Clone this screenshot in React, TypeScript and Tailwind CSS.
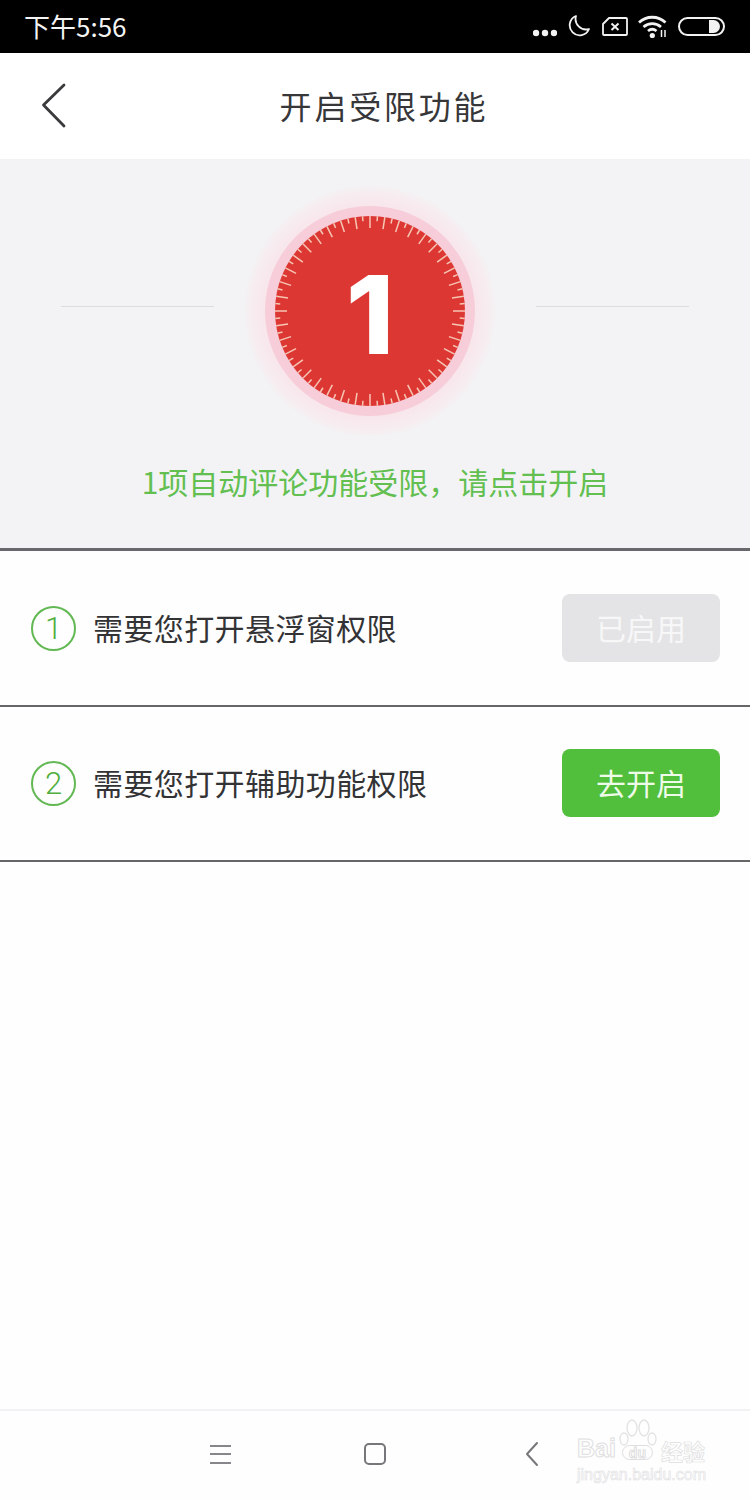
const TICKS = Array.from({ length: 80 }, (_, i) => i);

function Dial() {
  return (
    <div className="relative w-[250px] h-[250px] shrink-0">
      <svg width="250" height="250" viewBox="0 0 250 250">
        <defs>
          <radialGradient id="halo" cx="50%" cy="50%" r="50%">
            <stop offset="84%" stopColor="#f8e6eb" />
            <stop offset="94%" stopColor="#f7ecf0" />
            <stop offset="100%" stopColor="#f4f1f3" />
          </radialGradient>
        </defs>
        <circle cx="125" cy="125" r="125" fill="url(#halo)" />
        <circle cx="125" cy="125" r="105" fill="#f6cdd8" />
        <circle cx="125" cy="125" r="95" fill="#dd3733" />
        {TICKS.map((i) => (
          <line
            key={i}
            x1="125"
            y1="30"
            x2="125"
            y2={i % 2 === 0 ? 42 : 35}
            stroke="#f6c6b4"
            strokeWidth="1.500"
            transform={`rotate(${i * 4.5} 125 125)`}
          />
        ))}
      </svg>
      <div className="absolute inset-0 pt-[6px] flex items-center justify-center text-white text-[109px] font-extrabold font-['Inter',sans-serif] leading-none">
        1
      </div>
    </div>
  );
}

function StatusIcons() {
  return (
    <div className="flex items-center text-white">
      <svg width="24" height="8" viewBox="0 0 24 8" className="mt-[12px]">
        <circle cx="3" cy="4" r="3.200" fill="#f2f2f2" />
        <circle cx="12" cy="4" r="3.200" fill="#f2f2f2" />
        <circle cx="21" cy="4" r="3.200" fill="#f2f2f2" />
      </svg>
      <svg width="24" height="24" viewBox="0 0 24 24" fill="none" className="ml-[9px] -mt-[2px]">
        <path d="M10 2a10 10 0 1 0 13 13A10.500 10.500 0 0 1 10 2Z" stroke="#f2f2f2" strokeWidth="1.800" strokeLinejoin="round" />
      </svg>
      <svg width="26" height="19" viewBox="0 0 26 19" fill="none" className="ml-[12px]">
        <path d="M7 1h17a1 1 0 0 1 1 1v15a1 1 0 0 1-1 1H2a1 1 0 0 1-1-1V7Z" stroke="#f2f2f2" strokeWidth="1.800" strokeLinejoin="round" />
        <path d="M9.500 6.500l7 6.500M16.500 6.500l-7 6.500" stroke="#f2f2f2" strokeWidth="2" />
      </svg>
      <svg width="30" height="24" viewBox="0 0 30 24" fill="none" className="ml-[10px] mt-[1px]">
        <path d="M1 7.500c7.500-7 19-7 26.500 0" stroke="#f2f2f2" strokeWidth="2.800" />
        <path d="M5.500 12c5-4.500 12.500-4.500 17.500 0" stroke="#f2f2f2" strokeWidth="2.800" />
        <path d="M10 16c2.500-2 6-2 8.500 0" stroke="#f2f2f2" strokeWidth="2.800" />
        <circle cx="14.300" cy="20.500" r="2.600" fill="#f2f2f2" />
        <path d="M23.500 15v7M27 15v7" stroke="#f2f2f2" strokeWidth="1.500" />
      </svg>
      <div className="ml-[10px] w-[47px] h-[19px] rounded-full border-2 border-[#f2f2f2] flex justify-end items-center">
        <div className="w-[11px] h-[13px] mr-[3px] bg-[#f2f2f2] rounded-r-full" />
      </div>
    </div>
  );
}

function PermissionRow({
  num,
  label,
  action,
  enabled,
  className,
}: {
  num: number;
  label: string;
  action: string;
  enabled: boolean;
  className: string;
}) {
  return (
    <div className={`${className} shrink-0 border-b-2 border-[#666668] flex items-center pl-[31px] pr-[30px]`}>
      <div className="w-[45px] h-[45px] rounded-full border-2 border-[#62b852] flex items-center justify-center pt-[1px] text-[31px] leading-none font-light text-[#4fae3c] font-['Roboto',sans-serif]">
        {num}
      </div>
      <span className="ml-[17px] -mt-[2px] text-[30px] tracking-[0.4px] text-[#333336]">{label}</span>
      <button
        className={`ml-auto w-[158px] h-[68px] pb-[2px] rounded-lg text-[30px] ${
          enabled ? "bg-[#e4e4e6] text-[#f7f7f8]" : "bg-[#52bf3c] text-[#eefbe9]"
        }`}
      >
        {action}
      </button>
    </div>
  );
}

function Watermark() {
  return (
    <div className="absolute left-[577px] top-[8px] w-[136px] text-transparent [-webkit-text-stroke:1px_#dedee0] font-['Liberation_Sans',sans-serif]">
      <div className="flex items-end h-[42px] leading-none">
        <span className="text-[25px] font-bold">Bai</span>
        <span className="relative ml-[6px] mb-[1px] w-[31px] h-[15px] border-[1.500px] border-[#dedee0] rounded-full flex items-center justify-center text-[14px] font-bold">
          du
          <svg width="40" height="28" viewBox="0 0 40 28" className="absolute -top-[27px] -left-[5px]" fill="none" stroke="#e2e2e4" strokeWidth="1.300">
            <ellipse cx="6" cy="20" rx="4" ry="6" />
            <ellipse cx="14" cy="9" rx="5" ry="8" />
            <ellipse cx="26" cy="9" rx="5" ry="8" />
            <ellipse cx="34" cy="20" rx="4" ry="6" />
          </svg>
        </span>
        <span className="ml-[8px] text-[22px] font-['Noto_Sans_CJK_SC',sans-serif] font-bold [-webkit-text-stroke:0.700px_#dedee0]">经验</span>
      </div>
      <div className="text-[16px] leading-none mt-[6px] [-webkit-text-stroke:0.600px_#e0e0e2]">jingyan.baidu.com</div>
    </div>
  );
}

export default function App() {
  return (
    <div className="w-[750px] h-[1500px] overflow-hidden flex flex-col bg-[#fefefe] font-['Noto_Sans_CJK_SC','Noto_Sans',sans-serif]">
      <div className="h-[53px] shrink-0 bg-black flex items-center justify-between pl-[24px] pr-[25px]">
        <span className="text-[26px] pb-[2px] text-[#f4f4f4]">下午5:56</span>
        <StatusIcons />
      </div>

      <div className="h-[106px] shrink-0 bg-white relative flex items-center justify-center pl-[18px] pb-[2px]">
        <svg width="26" height="46" viewBox="0 0 26 46" fill="none" className="absolute left-[41px] top-[30px]">
          <path d="M23 2 L2.500 22 L23 43" stroke="#3a3a3c" strokeWidth="2.800" strokeLinecap="round" strokeLinejoin="round" />
        </svg>
        <span className="text-[32px] tracking-[2.800px] text-[#37373a]">开启受限功能</span>
      </div>

      <div className="h-[389px] shrink-0 bg-[#f3f3f5] flex flex-col items-center pt-[27px]">
        <div className="flex items-start">
          <div className="w-[153px] h-px mt-[120px] bg-[#dcdcdf]" />
          <div className="ml-[31px] mr-[41px]">
            <Dial />
          </div>
          <div className="w-[153px] h-px mt-[120px] bg-[#dcdcdf]" />
        </div>
        <div className="mt-[25px] h-[40px] leading-[40px] text-[30px] text-[#62bf50]">
          1项自动评论功能受限，请点击开启
        </div>
      </div>

      <div className="h-[3px] shrink-0 bg-[#68686c]" />

      <PermissionRow className="h-[156px]" num={1} label="需要您打开悬浮窗权限" action="已启用" enabled />
      <PermissionRow className="h-[155px] pb-[1px]" num={2} label="需要您打开辅助功能权限" action="去开启" enabled={false} />

      <div className="flex-1" />

      <div className="h-[91px] shrink-0 border-t-2 border-[#f2f2f4] pb-[3px] relative flex items-center">
        <div className="w-[21px] h-[19px] ml-[210px] flex flex-col justify-between">
          <div className="h-[2px] bg-[#87878b]" />
          <div className="h-[2px] bg-[#87878b]" />
          <div className="h-[2px] bg-[#87878b]" />
        </div>
        <div className="w-[22px] h-[22px] ml-[133px] rounded-[5px] border-2 border-[#77777b]" />
        <svg width="14" height="26" viewBox="0 0 14 26" fill="none" className="ml-[139px]">
          <path d="M12 2 L2 13 L12 24" stroke="#77777b" strokeWidth="2" strokeLinecap="round" strokeLinejoin="round" />
        </svg>
        <Watermark />
      </div>
    </div>
  );
}
